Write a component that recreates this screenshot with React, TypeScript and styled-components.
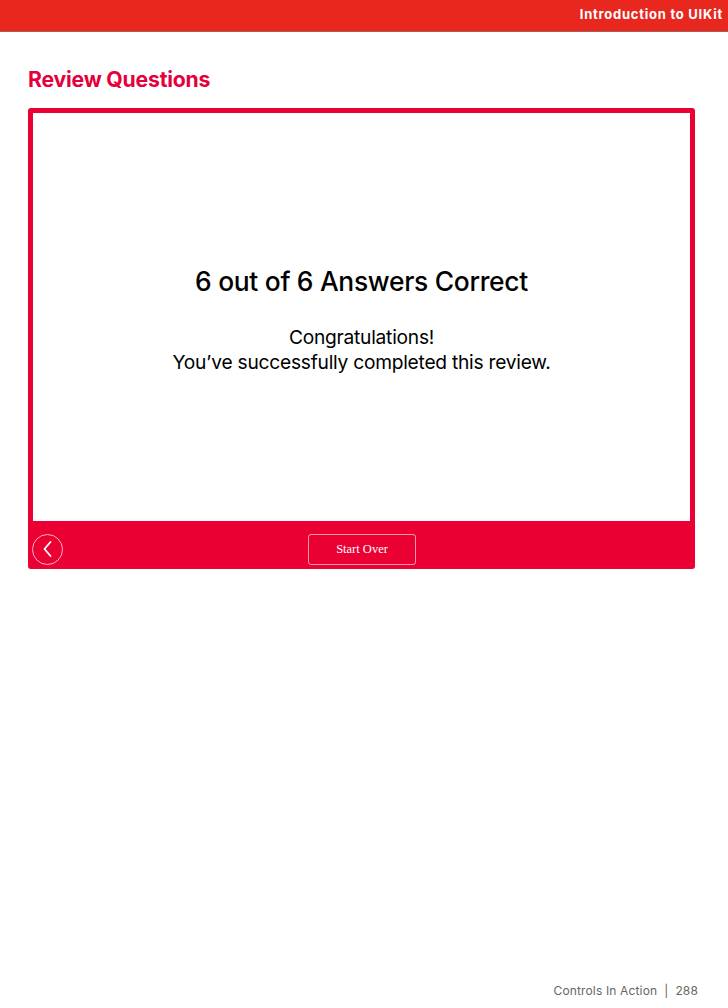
import React from "react";
import styled, { createGlobalStyle } from "styled-components";

const Global = createGlobalStyle`
  html, body { margin: 0; padding: 0; background: #ffffff; }
  body { font-family: Inter, "Noto Sans", sans-serif; }
`;

const Page = styled.div`
  width: 728px;
  height: 1008px;
  display: flex;
  flex-direction: column;
  background: #fff;
`;

const TopBar = styled.header`
  height: 32px;
  background: #e8271f;
  border-bottom: 1px solid #a8605a;
  display: flex;
  align-items: center;
  justify-content: flex-end;
  padding-right: 5px;
  box-sizing: border-box;
`;

const TopTitle = styled.span`
  color: #fff;
  font-family: Inter, sans-serif;
  font-weight: 700;
  font-size: 13px;
  letter-spacing: 0.75px;
  margin-top: -3px;
`;

const Content = styled.main`
  flex: 1;
  padding: 34px 33px 0 28px;
`;

const Heading = styled.h1`
  margin: 0 0 16px;
  color: #e4003b;
  font-family: Inter, sans-serif;
  font-weight: 700;
  font-size: 21.2px;
  line-height: 26px;
  letter-spacing: -0.2px;
`;

const Card = styled.section`
  width: 667px;
  height: 461px;
  background: #eb0033;
  border-radius: 3px;
  padding: 5px 5px 0;
  box-sizing: border-box;
  display: flex;
  flex-direction: column;
`;

const Body = styled.div`
  height: 408px;
  background: #fff;
  display: flex;
  flex-direction: column;
  align-items: center;
  justify-content: center;
  text-align: center;
  color: #000;
  padding-top: 6px;
  box-sizing: border-box;
`;

const Score = styled.h2`
  margin: 0 0 28px;
  font-family: Inter, sans-serif;
  font-weight: 500;
  font-size: 26.4px;
  line-height: 32px;
  letter-spacing: -0.3px;
`;

const Message = styled.p`
  margin: 0;
  font-family: Inter, sans-serif;
  font-weight: 400;
  font-size: 19.2px;
  line-height: 25px;
  letter-spacing: -0.25px;
`;

const Footer = styled.div`
  flex: 1;
  display: grid;
  grid-template-columns: 1fr auto 1fr;
  align-items: center;
  padding-top: 8px;
  margin-left: -1px;
`;

const BackButton = styled.button`
  width: 31px;
  height: 31px;
  border-radius: 50%;
  border: 1px solid rgba(255, 255, 255, 0.7);
  background: transparent;
  display: flex;
  align-items: center;
  justify-content: center;
  padding: 0;
  justify-self: start;
`;

const StartOver = styled.button`
  width: 108px;
  height: 31px;
  border: 1px solid rgba(255, 255, 255, 0.6);
  border-radius: 3px;
  background: transparent;
  color: #fff;
  font-family: "Liberation Serif", serif;
  font-size: 12.5px;
  margin-left: 2px;
  padding: 0;
`;

const PageFooter = styled.footer`
  height: 38px;
  display: flex;
  justify-content: flex-end;
  align-items: center;
  padding-right: 30px;
  color: #666;
  font-family: Inter, sans-serif;
  font-size: 12px;
  letter-spacing: 0.15px;
  box-sizing: border-box;
  padding-top: 2px;
`;

const Sep = styled.span`
  margin: 0 7px;
  color: #666;
`;

export default function App() {
  return (
    <>
      <Global />
      <Page>
        <TopBar>
          <TopTitle>Introduction to UIKit</TopTitle>
        </TopBar>
        <Content>
          <Heading>Review Questions</Heading>
          <Card>
            <Body>
              <Score>6 out of 6 Answers Correct</Score>
              <Message>
                Congratulations!
                <br />
                You’ve successfully completed this review.
              </Message>
            </Body>
            <Footer>
              <BackButton aria-label="Back">
                <svg width="14" height="18" viewBox="0 0 14 18" fill="none">
                  <path d="M9.5 2 L3.5 9 L9.5 16" stroke="#fff" strokeWidth="1.8" strokeLinecap="round" strokeLinejoin="round" />
                </svg>
              </BackButton>
              <StartOver>Start Over</StartOver>
              <span />
            </Footer>
          </Card>
        </Content>
        <PageFooter>
          Controls In Action<Sep>|</Sep>288
        </PageFooter>
      </Page>
    </>
  );
}
